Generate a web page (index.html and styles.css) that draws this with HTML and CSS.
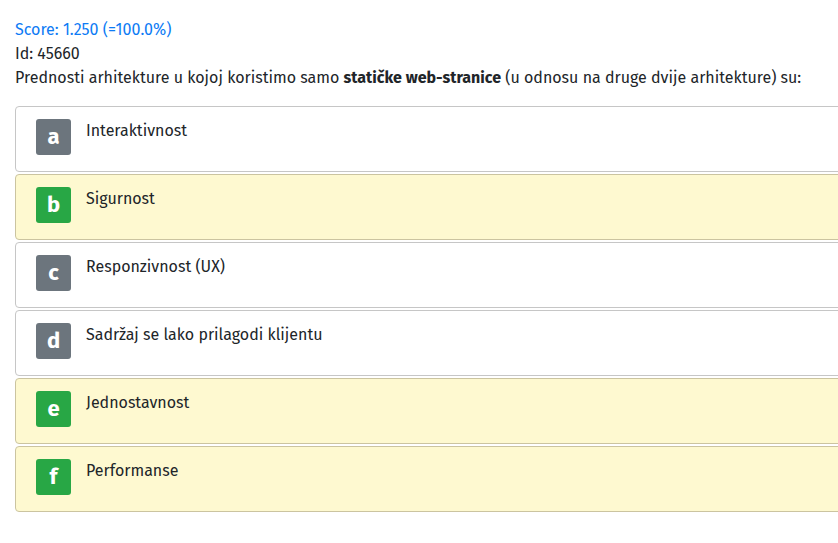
FILE: index.html
```html
<!DOCTYPE html>
<html lang="hr">
<head>
<meta charset="utf-8">
<title>Pitanje 45660</title>
<link rel="stylesheet" href="styles.css">
</head>
<body>
<div class="page">
  <div class="score">Score: 1.250 (=100.0%)</div>
  <div class="qid">Id: 45660</div>
  <div class="question">Prednosti arhitekture u kojoj koristimo samo <b>statičke web-stranice</b> (u odnosu na druge dvije arhitekture) su:</div>
  <div class="answers">
    <div class="answer"><span class="badge">a</span><span class="text">Interaktivnost</span></div>
    <div class="answer correct"><span class="badge">b</span><span class="text">Sigurnost</span></div>
    <div class="answer"><span class="badge">c</span><span class="text">Responzivnost (UX)</span></div>
    <div class="answer"><span class="badge">d</span><span class="text">Sadržaj se lako prilagodi klijentu</span></div>
    <div class="answer correct"><span class="badge">e</span><span class="text">Jednostavnost</span></div>
    <div class="answer correct"><span class="badge">f</span><span class="text">Performanse</span></div>
  </div>
</div>
</body>
</html>
```
FILE: styles.css
```css
html, body {
  margin: 0;
  padding: 0;
  overflow: hidden;
  background: #fff;
}
body {
  font-family: "Fira Sans", "Open Sans", sans-serif;
  font-size: 16px;
  line-height: 24px;
  color: #212529;
}
.page {
  padding: 18px 0 0 15px;
}
.score {
  color: #0d7bf5;
}
.question {
  white-space: nowrap;
  margin-bottom: 16px;
}
.question b {
  font-weight: 700;
}
.answers {
  display: flex;
  flex-direction: column;
  gap: 2px;
  width: 880px;
}
.answer {
  box-sizing: border-box;
  height: 66px;
  display: flex;
  align-items: flex-start;
  gap: 15px;
  padding: 10px 20px;
  border: 1px solid #c6c6c6;
  border-radius: 4px;
  background: #fff;
}
.answer.correct {
  background: #fef9d0;
  border-color: #cbc4a0;
}
.badge {
  flex: none;
  width: 35px;
  height: 36px;
  margin-top: 2px;
  border-radius: 3px;
  background: #6c757d;
  color: #fff;
  font-weight: 700;
  font-size: 22px;
  line-height: 36px;
  text-align: center;
}
.correct .badge {
  background: #28a745;
}
.text {
  padding-top: 2px;
}
```
